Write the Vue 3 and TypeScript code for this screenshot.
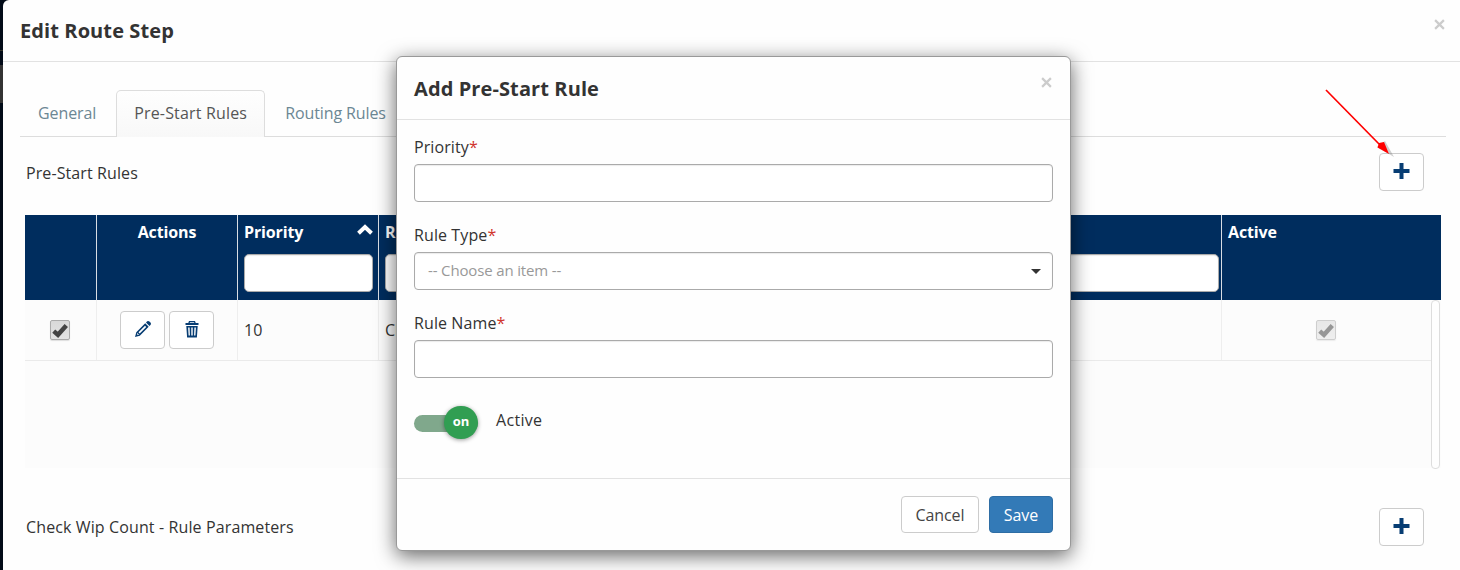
<script setup lang="ts">
import { ref } from 'vue'

interface Field {
  label: string
  kind: 'text' | 'select'
}

const tabs = ['General', 'Pre-Start Rules', 'Routing Rules']
const activeTab = ref('Pre-Start Rules')
const fields: Field[] = [
  { label: 'Priority', kind: 'text' },
  { label: 'Rule Type', kind: 'select' },
  { label: 'Rule Name', kind: 'text' },
]
</script>

<template>
  <div class="screen">
    <i class="strip-line"></i>
    <i class="strip-block"></i>
    <section class="page">
      <header class="page-head">
        <h1 class="title">Edit Route Step</h1>
        <svg class="close" viewBox="0 0 10 10"><path d="M1 1 9 9M9 1 1 9" /></svg>
      </header>

      <nav class="tabs">
        <a v-for="t in tabs" :key="t" class="tab" :class="{ active: t === activeTab }" @click="activeTab = t">{{ t }}</a>
      </nav>

      <div class="section-head">
        <span class="section-name">Pre-Start Rules</span>
        <button class="btn square"><svg class="plus" viewBox="0 0 17 16"><path d="M.5 8h16M8.500 0v16" /></svg></button>
      </div>

      <div class="grid">
        <div class="row head">
          <div class="cell"></div>
          <div class="cell centered"><span class="col-name">Actions</span></div>
          <div class="cell">
            <div class="col-line">
              <span class="col-name">Priority</span>
              <svg class="sort" viewBox="0 0 16 11"><path d="M1.500 9.200 8 3 14.500 9.200" /></svg>
            </div>
            <div class="filter"></div>
          </div>
          <div class="cell">
            <span class="col-name">Rule Name</span>
            <div class="filter"></div>
          </div>
          <div class="cell"><span class="col-name">Active</span></div>
        </div>
        <div class="body">
          <div class="row data">
            <div class="cell center">
              <span class="check"><svg viewBox="0 0 14 14"><path d="M1.500 8 5.200 11.200 12.500 3" /></svg></span>
            </div>
            <div class="cell center">
              <button class="btn square">
                <svg class="icon" viewBox="0 0 18 18">
                  <path fill-rule="evenodd" d="M1 17 2.300 12.200 11.200 3.300 14.700 6.800 5.800 15.700ZM3 14.200 3.900 15.100 5 14.700 3.300 13ZM4.500 12.300 5.700 13.500 12.200 7 11 5.800ZM12 2.500 13.200 1.300Q14.300.6 15.400 1.500L16.500 2.600Q17.400 3.700 16.700 4.800L15.500 6Z" />
                </svg>
              </button>
              <button class="btn square">
                <svg class="icon trash" viewBox="0 0 14 17">
                  <path fill-rule="evenodd" d="M4 0h6l.7 2H13.500V4H.5V2h2.800ZM4.900 1.200 4.700 2h4.600L9.100 1.200ZM1.300 5h11.400L11.900 16.500H2.100ZM3.100 6.500 3.600 14.500h1.300L4.600 6.500ZM6.300 6.500v8h1.400v-8ZM9.400 6.500 9.100 14.500h1.300L10.900 6.500Z" />
                </svg>
              </button>
            </div>
            <div class="cell value">10</div>
            <div class="cell value">Check Wip Count</div>
            <div class="cell center">
              <span class="check off"><svg viewBox="0 0 14 14"><path d="M1.500 8 5.200 11.200 12.500 3" /></svg></span>
            </div>
          </div>
          <div class="scroll"></div>
        </div>
      </div>

      <div class="section-head second">
        <span class="section-name">Check Wip Count - Rule Parameters</span>
        <button class="btn square"><svg class="plus" viewBox="0 0 17 16"><path d="M.5 8h16M8.500 0v16" /></svg></button>
      </div>
    </section>

    <svg class="arrow" viewBox="0 0 80 80">
      <path class="arrow-shade" d="M57 67 65 61 74 77Z" />
      <path class="arrow-line" d="M6 10 60 65" />
      <path class="arrow-tip" d="M57.500 67.500 59 63 64 62 69 74Z" />
    </svg>

    <section class="dialog">
      <header class="dialog-head">
        <h2 class="title">Add Pre-Start Rule</h2>
        <svg class="close" viewBox="0 0 10 10"><path d="M1 1 9 9M9 1 1 9" /></svg>
      </header>
      <div class="form">
        <div v-for="f in fields" :key="f.label" class="field">
          <label class="label"><span>{{ f.label }}</span><span class="star">*</span></label>
          <div class="control">
            <template v-if="f.kind === 'select'">
              <span class="placeholder">-- Choose an item --</span>
              <i class="caret"></i>
            </template>
          </div>
        </div>
        <div class="switch-row">
          <div class="switch"><span class="knob">on</span></div>
          <span class="switch-name">Active</span>
        </div>
      </div>
      <footer class="dialog-foot">
        <button class="btn cancel">Cancel</button>
        <button class="btn save">Save</button>
      </footer>
    </section>
  </div>
</template>

<style>
body {
  margin: 0;
  overflow: hidden;
}
</style>

<style scoped>
* {
  box-sizing: border-box;
}
.screen {
  position: relative;
  width: 1460px;
  height: 570px;
  padding-left: 3px;
  overflow: hidden;
  background: #020b18;
  color: #333;
  font: 16px/24px "Open Sans", "Noto Sans", sans-serif;
}
.strip-line {
  position: absolute;
  left: 0;
  top: 50px;
  width: 3px;
  height: 1px;
  background: #333329;
}
.strip-block {
  position: absolute;
  left: 0;
  top: 65px;
  width: 3px;
  height: 38px;
  background: #333;
}
.page {
  height: 570px;
  background: #fefefe;
  border-top-left-radius: 6px;
}
.page-head {
  display: flex;
  justify-content: space-between;
  height: 62px;
  padding: 18px 15px 0 17px;
  border-bottom: 1px solid #e2e2e2;
}
.title {
  margin: 0;
  font-size: 20px;
  line-height: 26px;
  font-weight: 700;
  letter-spacing: 0.1px;
}
.close {
  width: 11px;
  height: 11px;
  margin-top: 1px;
  fill: none;
  stroke: #ccc;
  stroke-width: 2;
}
.tabs {
  display: flex;
  height: 75px;
  margin: 0 14px 0 17px;
  padding-top: 28px;
  border-bottom: 1px solid #ddd;
}
.tab {
  height: 47px;
  margin-right: 2px;
  padding: 10px 17px;
  border: 1px solid transparent;
  border-bottom: 0;
  border-radius: 5px 5px 0 0;
  color: #6c8794;
  letter-spacing: -0.1px;
}
.tab.active {
  border-color: #ddd;
  background: linear-gradient(#fefefe, #f8f8f8);
  color: #555;
  letter-spacing: 0.17px;
}
.section-head {
  display: flex;
  align-items: center;
  justify-content: space-between;
  height: 38px;
  margin: 16px 36px 0 23px;
}
.section-name,
.label,
.switch-name {
  font-size: 16px;
  font-weight: 500;
  letter-spacing: 0.1px;
}
.section-name {
  padding-top: 2px;
}
.second .section-name {
  padding-top: 0;
  letter-spacing: 0.12px;
}
.btn {
  display: flex;
  align-items: center;
  justify-content: center;
  padding: 0;
  border: 1px solid #ccc;
  border-radius: 4px;
  background: #fff;
  font: 16px/24px "Open Sans", "Noto Sans", sans-serif;
}
.square {
  width: 45px;
  height: 38px;
}
.plus {
  width: 17px;
  height: 16px;
  margin-top: -2px;
  fill: none;
  stroke: #073d73;
  stroke-width: 4;
}
.grid {
  width: 1416px;
  margin: 24px 0 0 22px;
}
.row {
  display: grid;
  grid-template-columns: 72px 141px 141px 843px 1fr;
}
.head {
  height: 85px;
  background: #002d5e;
  color: #fff;
}
.cell {
  padding: 0 6px;
  border-right: 1px solid #eee;
}
.cell:last-child {
  border-right: 0;
}
.head .cell {
  padding-top: 5px;
  border-color: #d8dde4;
}
.centered {
  text-align: center;
}
.col-name {
  font-size: 16px;
  font-weight: 700;
  letter-spacing: -0.12px;
}
.col-line {
  display: flex;
  justify-content: space-between;
}
.sort {
  width: 16px;
  height: 11px;
  margin: 4px -1px 0 0;
  fill: none;
  stroke: #fff;
  stroke-width: 4;
}
.filter {
  width: 129px;
  height: 38px;
  margin-top: 10px;
  border: 1px solid #aaa;
  border-radius: 5px;
  background: #fff;
  box-shadow: inset 0 1px 1px rgba(0, 0, 0, 0.08);
}
.cell:nth-child(4) .filter {
  width: 834px;
}
.body {
  display: flex;
  align-items: flex-start;
  height: 168px;
  background: #fcfcfc;
}
.data {
  width: 1406px;
  height: 61px;
  border-bottom: 1px solid #eaeaea;
}
.data .center {
  display: flex;
  align-items: center;
  justify-content: center;
  gap: 4px;
}
.value {
  padding-top: 18px;
}
.check {
  display: flex;
  align-items: center;
  justify-content: center;
  width: 20px;
  height: 20px;
  margin-right: 2px;
  border: 1px solid #aaa;
  border-radius: 2px;
  background: linear-gradient(#d8d8d8, #e4e4e4);
  box-shadow: 0 1px 1px rgba(0, 0, 0, 0.12);
}
.check svg {
  width: 16px;
  height: 16px;
  margin-top: -1px;
  fill: none;
  stroke: #444;
  stroke-width: 3.900;
}
.check.off {
  opacity: 0.55;
}
.icon {
  width: 18px;
  height: 18px;
  margin-top: -2px;
  fill: #073d73;
}
.trash {
  width: 14px;
  height: 17px;
}
.scroll {
  width: 9px;
  height: 169px;
  border: 1px solid #ddd;
  border-radius: 4px;
  background: #fefefe;
}
.second {
  margin-top: 40px;
}
.arrow {
  position: absolute;
  left: 1320px;
  top: 80px;
  width: 80px;
  height: 80px;
}
.arrow-shade {
  fill: #777;
  opacity: 0.35;
}
.arrow-line {
  fill: none;
  stroke: #f00;
  stroke-width: 1.700;
}
.arrow-tip {
  fill: #f00;
}
.dialog {
  position: absolute;
  left: 396px;
  top: 56px;
  width: 675px;
  height: 495px;
  border: 1px solid #999;
  border-radius: 6px;
  background: #fefefe;
  box-shadow: 0 5px 20px rgba(0, 0, 0, 0.6);
}
.dialog-head {
  display: flex;
  justify-content: space-between;
  height: 63px;
  padding: 19px 18px 0 17px;
  border-bottom: 1px solid #e2e2e2;
}
.form {
  height: 358px;
  padding: 15px 17px 0;
}
.field {
  height: 88px;
}
.label {
  display: flex;
  height: 29px;
}
.star {
  color: #d0342c;
}
.control {
  display: flex;
  align-items: center;
  justify-content: space-between;
  height: 38px;
  padding: 0 11px 0 13px;
  border: 1px solid #aaa;
  border-radius: 4px;
  background: #fff;
  box-shadow: inset 0 1px 1px rgba(0, 0, 0, 0.08);
}
.placeholder {
  padding-bottom: 2px;
  color: #999;
  font-size: 15px;
  letter-spacing: -0.15px;
}
.caret {
  border: 5px solid transparent;
  border-top-color: #333;
  border-bottom: 0;
}
.switch-row {
  display: flex;
}
.switch {
  position: relative;
  width: 64px;
  height: 17px;
  margin: 16px 18px 0 0;
  border-radius: 9px;
  background: #80a88c;
}
.knob {
  position: absolute;
  right: 0;
  top: -9px;
  width: 34px;
  height: 33px;
  border-radius: 17px;
  background: #319e52;
  box-shadow: 0 1px 4px rgba(0, 0, 0, 0.4);
  color: #fff;
  font-size: 13px;
  font-weight: 700;
  line-height: 31px;
  text-align: center;
}
.switch-name {
  padding-top: 9px;
  letter-spacing: 0.3px;
}
.dialog-foot {
  display: flex;
  justify-content: flex-end;
  gap: 10px;
  height: 72px;
  padding: 17px 17px 0;
  border-top: 1px solid #e2e2e2;
}
.cancel {
  width: 78px;
  height: 37px;
  color: #444;
  letter-spacing: -0.1px;
}
.save {
  width: 64px;
  height: 37px;
  border-color: #2e6da4;
  background: #337ab7;
  color: #fff;
}
</style>
